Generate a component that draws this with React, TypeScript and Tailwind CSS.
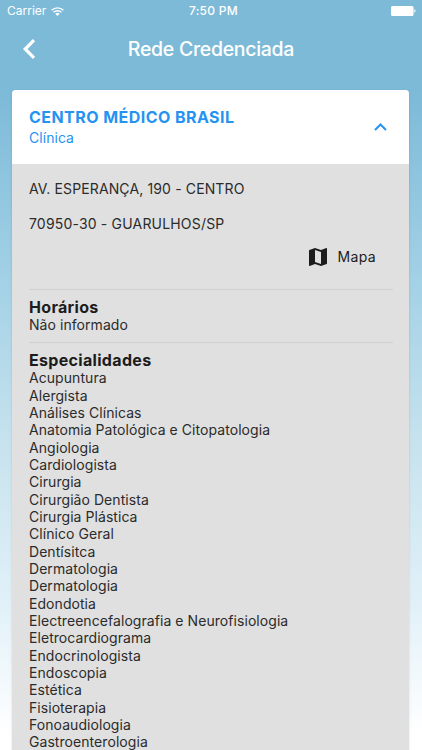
import React, { useState } from "react";

interface Provider {
  name: string;
  kind: string;
  street: string;
  city: string;
  hours: string;
  specialties: string[];
}

const provider: Provider = {
  name: "CENTRO MÉDICO BRASIL",
  kind: "Clínica",
  street: "AV. ESPERANÇA, 190 - CENTRO",
  city: "70950-30 - GUARULHOS/SP",
  hours: "Não informado",
  specialties: [
    "Acupuntura",
    "Alergista",
    "Análises Clínicas",
    "Anatomia Patológica e Citopatologia",
    "Angiologia",
    "Cardiologista",
    "Cirurgia",
    "Cirurgião Dentista",
    "Cirurgia Plástica",
    "Clínico Geral",
    "Dentísitca",
    "Dermatologia",
    "Dermatologia",
    "Edondotia",
    "Electreencefalografia e Neurofisiologia",
    "Eletrocardiograma",
    "Endocrinologista",
    "Endoscopia",
    "Estética",
    "Fisioterapia",
    "Fonoaudiologia",
    "Gastroenterologia",
  ],
};

function StatusBar() {
  return (
    <div className="grid h-[22px] grid-cols-[1fr_auto_1fr] items-center pl-[7px] pr-[6px] text-[12px] text-white">
      <div className="flex items-center gap-[5px]">
        <span>Carrier</span>
        <svg className="h-[9px] w-[13px]" viewBox="0 0 13 9" fill="none" stroke="currentColor" strokeWidth="1.4">
          <path d="M0.6 3.3a8.4 8.4 0 0 1 11.8 0" />
          <path d="M2.6 5.3a5.5 5.5 0 0 1 7.8 0" />
          <path d="M6.5 9L4.3 6.8a3.1 3.1 0 0 1 4.4 0z" fill="currentColor" stroke="none" />
        </svg>
      </div>
      <span className="pl-[4px] text-center font-medium tracking-[0.3px]">7:50 PM</span>
      <svg className="h-[10px] w-[25px] justify-self-end" viewBox="0 0 25 10" fill="currentColor">
        <rect width="22.5" height="10" rx="1.5" />
        <path d="M23.3 3.3c1.6.3 1.6 3.1 0 3.4z" />
      </svg>
    </div>
  );
}

function Header() {
  return (
    <div className="grid h-[54px] grid-cols-[60px_1fr_60px] items-center text-white">
      <button className="pl-[22px]" aria-label="Voltar">
        <svg className="h-[20px] w-[14px]" viewBox="0 0 14 20" fill="none" stroke="currentColor" strokeWidth="3.2">
          <path d="M12 1.2L3.2 10l8.8 8.8" />
        </svg>
      </button>
      <h1 className="pt-[2px] text-center text-[19.5px] font-medium tracking-[-0.3px]">Rede Credenciada</h1>
    </div>
  );
}

export default function App() {
  const [open, setOpen] = useState(true);

  return (
    <div className="h-[750px] overflow-hidden bg-linear-[180deg,#7cbad8_0px,#7cbad8_90px,#a3d1e6_280px,#c8e3ee_450px,#e0f0f8_600px,#ffffff_735px] font-['Inter','Liberation_Sans',sans-serif]">
      <StatusBar />
      <Header />

      <div className="ml-[12.4px] mr-[12.6px] mt-[14px] overflow-hidden rounded-[4px] bg-[#e0e0e0] shadow-sm">
        <button
          className="flex h-[74px] w-full items-center justify-between bg-white pl-[16.6px] pr-[22px] text-left text-[#2793f0]"
          onClick={() => setOpen(!open)}
        >
          <div>
            <div className="text-[16px] font-bold leading-[22px] tracking-[0.45px]">{provider.name}</div>
            <div className="text-[14px] leading-[20px] tracking-[0.05px]">{provider.kind}</div>
          </div>
          <svg
            className={`h-[8px] w-[13px] ${open ? "" : "rotate-180"}`}
            viewBox="0 0 13 8"
            fill="none"
            stroke="currentColor"
            strokeWidth="2"
          >
            <path d="M1 7l5.5-5.5L12 7" />
          </svg>
        </button>

        {open && (
          <div className="px-[16.6px] pb-4 text-[14px] leading-[17.33px] tracking-[0.06px] text-[#2b2b2b]">
            <p className="pt-[16.2px] tracking-[0.13px]">{provider.street}</p>
            <p className="pt-[17.33px] tracking-[0.18px]">{provider.city}</p>

            <div className="flex h-[56.8px] items-center justify-end gap-[8px] pb-[8px] pr-[17px]">
              <svg className="h-[24px] w-[24px] text-[#1c1c1c]" viewBox="0 0 24 24" fill="currentColor">
                <path d="M20.5 3l-.16.03L15 5.1 9 3 3.36 4.9c-.21.07-.36.25-.36.48V20.5c0 .28.22.5.5.5l.16-.03L9 18.9l6 2.1 5.64-1.9c.21-.07.36-.25.36-.48V3.5c0-.28-.22-.5-.5-.5zM15 19l-6-2.11V5l6 2.11V19z" />
              </svg>
              <span className="tracking-[0.3px] text-[#1c1c1c]">Mapa</span>
            </div>

            <section className="h-[53px] border-t border-[#d0d0d0] pt-[8px]">
              <h2 className="text-[16px] font-bold leading-[18.4px] tracking-[0.32px] text-[#1c1c1c]">Horários</h2>
              <p>{provider.hours}</p>
            </section>

            <section className="border-t border-[#d0d0d0] pt-[8px]">
              <h2 className="text-[16px] font-bold leading-[18.4px] tracking-[0.32px] text-[#1c1c1c]">Especialidades</h2>
              <ul>
                {provider.specialties.map((item, i) => (
                  <li key={i}>{item}</li>
                ))}
              </ul>
            </section>
          </div>
        )}
      </div>
    </div>
  );
}
